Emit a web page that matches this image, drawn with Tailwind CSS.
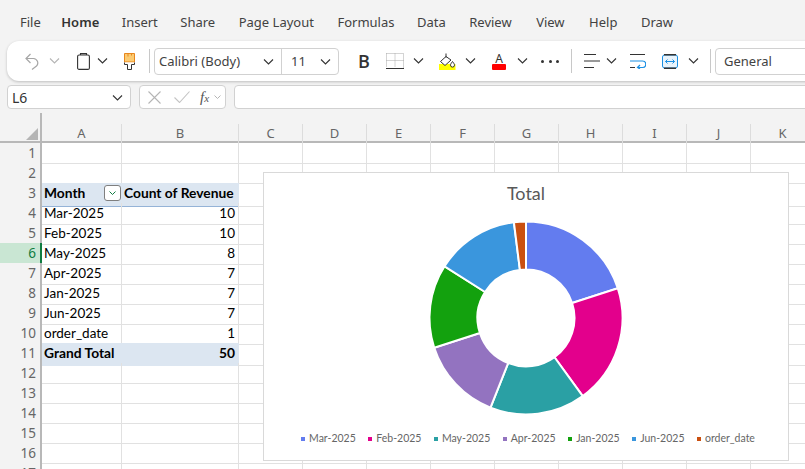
<!DOCTYPE html>
<html lang="en">
<head>
  <meta charset="UTF-8" />
  <title>Workbook</title>
  <script src="https://cdn.jsdelivr.net/npm/@tailwindcss/browser@4"></script>
</head>
<body class="w-[805px] h-[469px] overflow-hidden bg-[#f3f3f3] font-['Noto_Sans',sans-serif] text-[#424242]">

  <!-- Tabs -->
  <nav class="h-[41px] pl-[20px] pt-[5px] flex items-center gap-[23.500px] text-[13px]">
    <span class="mr-[-3px]">File</span>
    <span class="mr-[-1px] font-semibold text-[#333]">Home</span>
    <span>Insert</span>
    <span class="ml-[-1px]">Share</span>
    <span>Page Layout</span>
    <span class="mr-[-1px]">Formulas</span>
    <span>Data</span>
    <span>Review</span>
    <span class="ml-[1px]">View</span>
    <span class="ml-[1px]">Help</span>
    <span>Draw</span>
  </nav>

  <!-- Ribbon -->
  <div class="ml-[7px] w-[830px] h-[40px] bg-white rounded-l-xl shadow-[0_1px_3px_rgba(0,0,0,0.22)] flex items-center">
    <svg class="ml-[18px]" width="14" height="17" viewBox="0 0 14 17" fill="none" stroke="#a6a6a6" stroke-width="1.2"><path d="M5.500 1 1 5.500 5.500 10M1 5.500h7.500a4.500 4.500 0 0 1 3 7.600L7 16.500"/></svg>
    <svg class="ml-[10px]" width="11" height="6" viewBox="0 0 11 6" fill="none" stroke="#b5b5b5" stroke-width="1.1"><path d="M1 .5l4.500 4.500L10 .5"/></svg>
    <svg class="ml-[17px]" width="13" height="17" viewBox="0 0 13 17" fill="none" stroke="#333" stroke-width="1.1"><rect x=".6" y="2" width="11.800" height="14.400" rx="1.500"/><path d="M3.500 2V.6h6V2"/></svg>
    <svg class="ml-[7px]" width="11" height="6" viewBox="0 0 11 6" fill="none" stroke="#333" stroke-width="1.1"><path d="M1 .5l4.500 4.500L10 .5"/></svg>
    <svg class="ml-[16px]" width="11" height="17" viewBox="0 0 11 17"><path d="M.5.500h10v8.500H.5z" fill="#fbcb72" stroke="#e8871e"/><path d="M4 .5v3M7.500 .5v2" stroke="#e8871e"/><path d="M.5 9.500v2h3v5h4v-5h3v-2" fill="#fff" stroke="#333"/></svg>
    <div class="ml-[14px] w-px h-[24px] bg-[#c8c8c8]"></div>

    <div class="ml-[4px] w-[185px] h-[27px] border border-[#d1d1d1] rounded-[4px] flex items-center text-[13px]">
      <div class="w-[127px] h-full pl-[4px] pr-[7px] pt-[1px] border-r border-[#d1d1d1] flex items-center justify-between">
        <span>Calibri (Body)</span>
        <svg width="11" height="6" viewBox="0 0 11 6" fill="none" stroke="#333" stroke-width="1.1"><path d="M1 .5l4.500 4.500L10 .5"/></svg>
      </div>
      <div class="flex-1 pl-[9px] pr-[7px] pt-[1px] flex items-center justify-between">
        <span>11</span>
        <svg width="11" height="6" viewBox="0 0 11 6" fill="none" stroke="#333" stroke-width="1.1"><path d="M1 .5l4.500 4.500L10 .5"/></svg>
      </div>
    </div>

    <span class="ml-[19px] w-[13px] text-[18px] leading-none font-semibold text-[#333] font-['Open_Sans',sans-serif]">B</span>
    <svg class="ml-[15px]" width="18" height="16" viewBox="0 0 18 16" fill="none" stroke="#a8a8a8" stroke-dasharray="1 1"><path d="M.5.500h17v14M.5.500v14M9 .500v14M.500 7.500h17"/><path d="M0 15.500h18" stroke="#333" stroke-dasharray="none"/></svg>
    <svg class="ml-[9px]" width="11" height="6" viewBox="0 0 11 6" fill="none" stroke="#333" stroke-width="1.1"><path d="M1 .5l4.500 4.500L10 .5"/></svg>
    <svg class="ml-[15px]" width="17" height="17" viewBox="0 0 17 17" fill="none" stroke="#333" stroke-width="1"><path d="M0 11h16.500v6H0z" fill="#ffff00" stroke="none"/><path d="M7 .5v4M7 3.500l-5.500 5L6 12.500l6-5.500z" fill="#fff"/><path d="M13.500 8.500c1.500 2 2 2.800 2 3.600a2 2 0 0 1-4 0c0-.8.500-1.600 2-3.600z" fill="#fff"/></svg>
    <svg class="ml-[9px]" width="11" height="6" viewBox="0 0 11 6" fill="none" stroke="#333" stroke-width="1.1"><path d="M1 .5l4.500 4.500L10 .5"/></svg>
    <div class="ml-[16px] w-[14px] h-[17px] flex flex-col items-center justify-between">
      <span class="text-[12px] leading-[11px] text-[#333]">A</span>
      <div class="w-[14px] h-[6px] rounded-[1px] bg-[#ff0000]"></div>
    </div>
    <svg class="ml-[11px]" width="11" height="6" viewBox="0 0 11 6" fill="none" stroke="#333" stroke-width="1.1"><path d="M1 .5l4.500 4.500L10 .5"/></svg>
    <div class="ml-[13px] w-[18px] flex justify-between">
      <div class="w-[3px] h-[3px] rounded-full bg-[#333]"></div>
      <div class="w-[3px] h-[3px] rounded-full bg-[#333]"></div>
      <div class="w-[3px] h-[3px] rounded-full bg-[#333]"></div>
    </div>
    <div class="ml-[12px] w-px h-[24px] bg-[#c8c8c8]"></div>
    <svg class="ml-[12px]" width="16" height="14" viewBox="0 0 16 14" stroke="#333"><path d="M0 .5h12M0 7h16M0 13.500h10"/></svg>
    <svg class="ml-[6px]" width="11" height="6" viewBox="0 0 11 6" fill="none" stroke="#333" stroke-width="1.1"><path d="M1 .5l4.500 4.500L10 .5"/></svg>
    <svg class="ml-[13px]" width="16" height="15" viewBox="0 0 16 15" fill="none"><path d="M0 .5h15M0 13.500h5" stroke="#333"/><path d="M0 7h12.500a2.800 2.800 0 0 1 0 6.500H8M10 11l-2.500 2.500L10 15" stroke="#1a8fe3" stroke-width="1.200"/></svg>
    <svg class="ml-[16px]" width="16" height="15" viewBox="0 0 16 15" fill="none"><rect x=".5" y="1" width="15" height="13" rx="2" fill="#e9f4fc" stroke="#1a8fe3"/><path d="M2 .8h12M2 14.200h12" stroke="#333" stroke-width="1.500"/><path d="M3.500 7.500h9M5.500 5.500l-2 2 2 2M10.500 5.500l2 2-2 2" stroke="#1a8fe3"/></svg>
    <svg class="ml-[10px]" width="11" height="6" viewBox="0 0 11 6" fill="none" stroke="#333" stroke-width="1.1"><path d="M1 .5l4.500 4.500L10 .5"/></svg>
    <div class="ml-[11px] w-px h-[24px] bg-[#c8c8c8]"></div>
    <div class="ml-[4px] w-[120px] h-[27px] border border-[#d1d1d1] rounded-[4px] pl-[8px] pt-[1px] flex items-center text-[13px]">General</div>
  </div>

  <!-- Formula bar -->
  <div class="mt-[4px] ml-[7px] w-[830px] h-[24px] flex text-[14px]">
    <div class="w-[124px] pl-[4px] pr-[7px] pt-[1px] bg-white border border-[#d1d1d1] rounded-[4px] flex items-center justify-between text-[#333]">
      <span>L6</span>
      <svg width="11" height="6" viewBox="0 0 11 6" fill="none" stroke="#333" stroke-width="1.1"><path d="M1 .5l4.500 4.500L10 .5"/></svg>
    </div>
    <div class="ml-[8px] w-[87px] pl-[8px] bg-white border border-[#d1d1d1] rounded-[4px] flex items-center">
      <svg width="13" height="13" viewBox="0 0 13 13" fill="none" stroke="#b5b5b5" stroke-width="1.1"><path d="M.5.500l12 12M12.500.500l-12 12"/></svg>
      <svg class="ml-[13px]" width="16" height="12" viewBox="0 0 16 12" fill="none" stroke="#c4c4c4" stroke-width="1.1"><path d="M.5 6.500l5 5L15.500.5"/></svg>
      <span class="ml-[10px] font-['Liberation_Serif',serif] italic text-[15px] leading-none text-[#555]">f<span class="text-[11px]">x</span></span>
      <svg class="ml-[5px]" width="7" height="4" viewBox="0 0 7 4" fill="none" stroke="#b5b5b5"><path d="M.5.500l3 3 3-3"/></svg>
    </div>
    <div class="ml-[8px] flex-1 bg-white border border-[#d1d1d1] rounded-[4px]"></div>
  </div>

  <!-- Sheet -->
  <div class="relative mt-[15px] h-[345px] font-['Lato',sans-serif] text-[13.500px] text-black">
    <div class="absolute left-[40px] top-[-11px] w-[2px] h-[11px] bg-[#b8b8b8]"></div>
    <div class="h-[19px] pb-[1px] grid grid-cols-[42px_80px_117px_repeat(9,64px)] border-b-2 border-[#b8b8b8] text-[#666] font-['Noto_Sans',sans-serif] text-[13px]">
      <div class="relative border-r-2 border-[#b8b8b8]">
        <svg class="absolute left-[26px] top-[4px]" width="12" height="12" viewBox="0 0 12 12"><path d="M12 0v12H0z" fill="#b5b5b5"/></svg>
      </div>
      <div class="border-r border-[#dcdcdc] flex items-center justify-center">A</div>
      <div class="border-r border-[#dcdcdc] flex items-center justify-center">B</div>
      <div class="border-r border-[#dcdcdc] flex items-center justify-center">C</div>
      <div class="border-r border-[#dcdcdc] flex items-center justify-center">D</div>
      <div class="border-r border-[#dcdcdc] flex items-center justify-center">E</div>
      <div class="border-r border-[#dcdcdc] flex items-center justify-center">F</div>
      <div class="border-r border-[#dcdcdc] flex items-center justify-center">G</div>
      <div class="border-r border-[#dcdcdc] flex items-center justify-center">H</div>
      <div class="border-r border-[#dcdcdc] flex items-center justify-center">I</div>
      <div class="border-r border-[#dcdcdc] flex items-center justify-center">J</div>
      <div class="border-r border-[#dcdcdc] flex items-center justify-center">K</div>
    </div>
    <div id="rows"></div>

    <!-- Chart -->
    <div class="absolute left-[263px] top-[48px] w-[526px] h-[289px] bg-white border border-[#d9d9d9] flex flex-col items-center">
      <div class="mt-[7px] h-[26px] leading-[26px] text-[18px] text-[#595959]">Total</div>
      <svg id="donut" class="ml-[-1px] mt-[12px]" width="200" height="200" viewBox="-100 -100 200 200"></svg>
      <div id="legend" class="ml-[4px] mt-[13px] flex text-[10.500px] text-[#666]"></div>
    </div>
  </div>

  <script>
    const pivot = {
      3: ['Month', 'Count of Revenue'],
      4: ['Mar-2025', 10],
      5: ['Feb-2025', 10],
      6: ['May-2025', 8],
      7: ['Apr-2025', 7],
      8: ['Jan-2025', 7],
      9: ['Jun-2025', 7],
      10: ['order_date', 1],
      11: ['Grand Total', 50]
    };

    const blankCells = '<div class="border-r border-b border-[#e1e1e1]"></div>'.repeat(9);
    let html = '';
    for (let n = 1; n <= 17; n++) {
      const row = pivot[n];
      const head = n === 6
        ? `<div class="bg-[#c9e6d3] border-b border-[#dcdcdc] border-r-2 border-r-[#107c41] pr-[4px] text-right text-[#107c41] font-['Noto_Sans',sans-serif] text-[13.500px] leading-[20px]">${n}</div>`
        : `<div class="bg-[#f3f3f3] border-b border-[#dcdcdc] border-r-2 border-r-[#b8b8b8] pr-[4px] text-right text-[#666] font-['Noto_Sans',sans-serif] text-[13.500px] leading-[20px]">${n}</div>`;
      let cells = '';
      if (n === 3) {
        cells = `<div class="bg-[#dce6f1] border-b border-[#95b3d7] pl-[2px] pr-[1px] pb-[2px] text-[13.800px] font-bold flex items-center justify-between">
            ${row[0]}
            <span class="w-[17px] h-[16px] bg-white border border-[#7f7f7f] rounded-[3px] flex items-center justify-center">
              <svg width="7" height="4" viewBox="0 0 7 4" fill="none" stroke="#107c41"><path d="M.5.500l3 3 3-3"/></svg>
            </span>
          </div>
          <div class="bg-[#dce6f1] border-b border-[#95b3d7] pl-[2px] pb-[2px] text-[13.800px] font-bold flex items-center">${row[1]}</div>`;
      } else if (n === 11) {
        cells = `<div class="bg-[#dce6f1] pl-[2px] pb-[2px] text-[13.800px] font-bold flex items-center">${row[0]}</div>
          <div class="bg-[#dce6f1] pr-[4px] pb-[2px] text-[13.800px] font-bold flex items-center justify-end">${row[1]}</div>`;
      } else if (n === 10) {
        cells = `<div class="border-r border-b border-r-[#e1e1e1] border-b-[#95b3d7] pl-[2px] pb-[1px] flex items-center">${row[0]}</div>
          <div class="border-r border-b border-r-[#e1e1e1] border-b-[#95b3d7] pr-[3px] pb-[1px] flex items-center justify-end">${row[1]}</div>`;
      } else if (row) {
        cells = `<div class="border-r border-b border-[#e1e1e1] pl-[2px] pb-[1px] flex items-center">${row[0]}</div>
          <div class="border-r border-b border-[#e1e1e1] pr-[3px] pb-[1px] flex items-center justify-end">${row[1]}</div>`;
      } else {
        cells = '<div class="border-r border-b border-[#e1e1e1]"></div><div class="border-r border-b border-[#e1e1e1]"></div>';
      }
      html += `<div class="h-[20px] grid grid-cols-[42px_80px_117px_repeat(9,64px)] bg-white">${head}${cells}${blankCells}</div>`;
    }
    document.getElementById('rows').innerHTML = html;

    const slices = [
      ['Mar-2025', 10, '#637cef'],
      ['Feb-2025', 10, '#e3008c'],
      ['May-2025', 8, '#2aa0a4'],
      ['Apr-2025', 7, '#9373c0'],
      ['Jan-2025', 7, '#13a10e'],
      ['Jun-2025', 7, '#3a96dd'],
      ['order_date', 1, '#ca5010']
    ];

    const R = 96.5, r = 48.5;
    const pt = (rad, a) => `${(rad * Math.sin(a)).toFixed(2)} ${(-rad * Math.cos(a)).toFixed(2)}`;
    let sum = 0, svg = '', legend = '';
    slices.forEach(([label, value, color]) => {
      const a0 = sum / 50 * 2 * Math.PI;
      sum += value;
      const a1 = sum / 50 * 2 * Math.PI;
      const large = a1 - a0 > Math.PI ? 1 : 0;
      svg += `<path d="M${pt(r, a0)}L${pt(R, a0)}A${R} ${R} 0 ${large} 1 ${pt(R, a1)}L${pt(r, a1)}A${r} ${r} 0 ${large} 0 ${pt(r, a0)}Z" fill="${color}" stroke="#fff" stroke-width="2"/>`;
      legend += `<div class="flex items-center mr-[12.500px] last:mr-0">
        <span class="w-[4px] h-[4px] mr-[4px]" style="background:${color}"></span>${label}
      </div>`;
    });
    document.getElementById('donut').innerHTML = svg;
    document.getElementById('legend').innerHTML = legend;
  </script>
</body>
</html>
